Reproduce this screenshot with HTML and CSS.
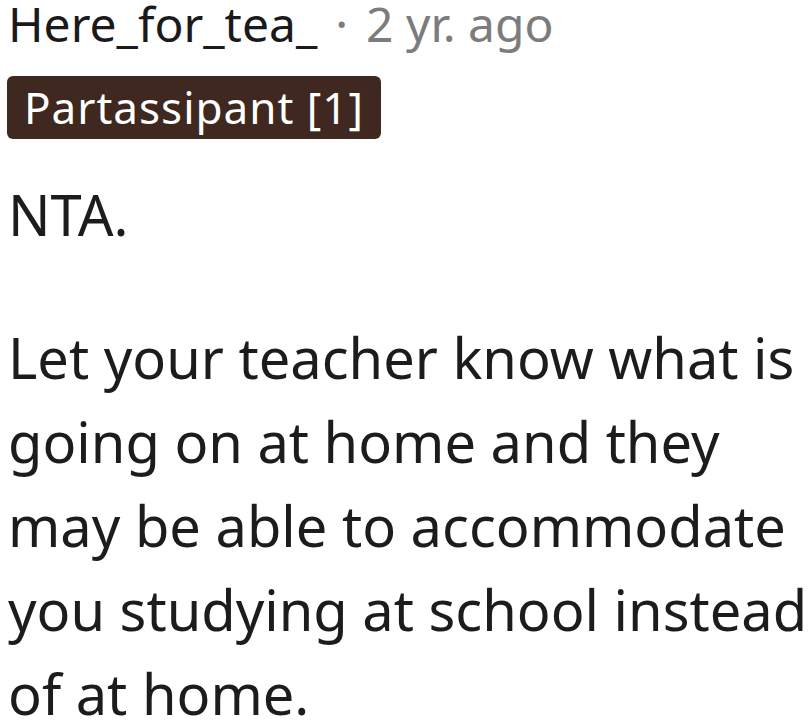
FILE: index.html
```html
<!DOCTYPE html>
<html>
<head>
<meta charset="utf-8">
<link rel="stylesheet" href="styles.css">
</head>
<body>
<div class="comment">
  <div class="meta">
    <span class="author">Here_for_tea_</span>
    <span class="sep">·</span>
    <span class="time">2 yr. ago</span>
  </div>
  <div class="flair-row"><span class="flair">Partassipant [1]</span></div>
  <div class="body">
    <p class="verdict">NTA.</p>
    <p class="text">Let your teacher know what is going on at home and they may be able to accommodate you studying at school instead of at home.</p>
  </div>
</div>
</body>
</html>
```

FILE: styles.css
```css
html, body {
  margin: 0;
  padding: 0;
  background: #ffffff;
}
body {
  font-family: "Noto Sans", "Open Sans", sans-serif;
  color: #1c1c1c;
  overflow: hidden;
}
.comment {
  padding: 0 0 0 8px;
}
.meta {
  display: flex;
  align-items: baseline;
  gap: 18px;
  font-size: 48px;
  line-height: 56px;
  margin-top: -4px;
}
.author {
  color: #1a1a1b;
}
.sep,
.time {
  color: #7c7c7c;
}
.flair-row {
  margin-top: 24px;
  display: flex;
}
.flair {
  background: #3e2820;
  color: #ffffff;
  font-size: 44px;
  letter-spacing: 1px;
  line-height: 63px;
  padding: 0 17px;
  margin-left: -1px;
  border-radius: 6px;
}
.body {
  font-size: 56px;
  line-height: 84px;
}
.body .verdict {
  margin: 33px 0 0;
}
.body .text {
  margin: 59px 0 0;
}
```
